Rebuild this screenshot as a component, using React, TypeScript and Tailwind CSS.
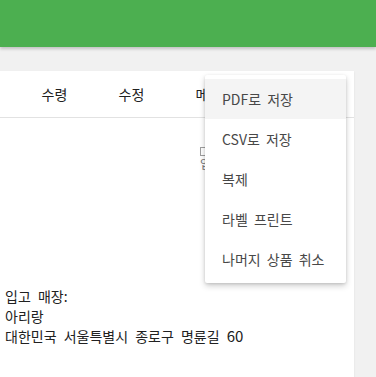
import React from 'react';

const tabs = ['수령', '수정', '메모'];
const menuItems = ['PDF로 저장', 'CSV로 저장', '복제', '라벨 프린트', '나머지 상품 취소'];

export default function App() {
  const font = { fontFamily: '"Noto Sans CJK KR", "Noto Sans", sans-serif' };
  return (
    <div className="relative w-[376px] h-[377px] overflow-hidden bg-[#f1f1f1]" style={font}>
      <header className="h-[47px] bg-[#4caf50] shadow-[0_2px_3px_rgba(0,0,0,0.2)]" />

      <div className="mt-[24px] w-[354px] h-[400px] bg-white shadow-[0_1px_2px_rgba(0,0,0,0.08)]">
        <div className="flex h-[47px] border-b border-[#e2e2e2] pl-[16px]">
          {tabs.map((t) => (
            <div key={t} className="w-[77px] flex items-center justify-center text-[14px] text-[#212121]">
              {t}
            </div>
          ))}
        </div>

        <div className="relative h-[168px]">
          <div className="absolute left-[200px] top-[29px] flex flex-col items-start text-[12px] text-[#757575]">
            <span className="w-[9px] h-[9px] border border-[#9e9e9e] bg-white" />
            <span className="leading-[16px]">입고</span>
          </div>
        </div>

        <div className="px-[5px] text-[14px] leading-[20px] text-[#212121] [word-spacing:4px]">
          <div>입고 매장:</div>
          <div>아리랑</div>
          <div>
            대한민국 서울특별시 종로구 명륜길 <span className="text-[15px]">60</span>
          </div>
        </div>
      </div>

      <div className="absolute left-[205px] top-[75px] w-[141px] py-[4px] bg-white rounded-[2px] shadow-[0_3px_6px_rgba(0,0,0,0.18),0_1px_3px_rgba(0,0,0,0.12)]">
        {menuItems.map((m, i) => (
          <div
            key={m}
            className={`h-[40px] pl-[17px] flex items-center text-[14px] text-[#484848] whitespace-nowrap [word-spacing:3px] ${i === 0 ? 'bg-[#f4f4f4]' : ''}`}
          >
            {m}
          </div>
        ))}
      </div>
    </div>
  );
}
